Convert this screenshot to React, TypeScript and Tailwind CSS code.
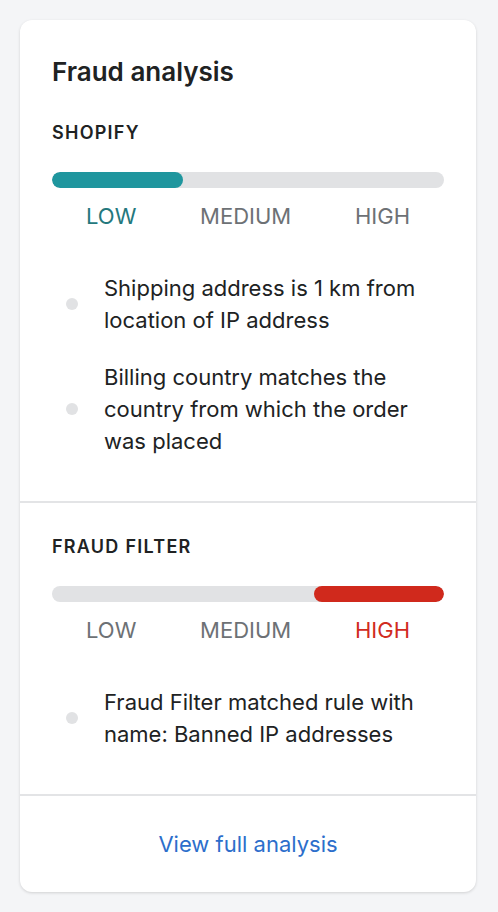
import React from 'react';

type Level = 'low' | 'medium' | 'high';

interface Section {
  name: string;
  level: Level;
  facts: string[];
}

const sections: Section[] = [
  {
    name: 'Shopify',
    level: 'low',
    facts: [
      'Shipping address is 1 km from location of IP address',
      'Billing country matches the country from which the order was placed',
    ],
  },
  {
    name: 'Fraud Filter',
    level: 'high',
    facts: ['Fraud Filter matched rule with name: Banned IP addresses'],
  },
];

function RiskBar({ level }: { level: Level }) {
  return (
    <div className="mt-[27px]">
      <div className="h-4 w-full rounded-full bg-[#e1e2e4] flex overflow-hidden">
        {level === 'low' && <div className="h-full w-1/3 rounded-full bg-[#1f969e]" />}
        {level === 'high' && (
          <>
            <div className="flex-1" />
            <div className="h-full w-[130px] rounded-full bg-[#d0291c]" />
          </>
        )}
      </div>
      <div className="mt-[14px] flex justify-between px-[34px] text-[22px] leading-7 text-[#6d7175]">
        <span className={level === 'low' ? 'text-[#24787d]' : ''}>LOW</span>
        <span className={level === 'medium' ? 'text-[#b98900]' : ''}>MEDIUM</span>
        <span className={level === 'high' ? 'text-[#d12b1f]' : ''}>HIGH</span>
      </div>
    </div>
  );
}

export default function App() {
  return (
    <div className="min-h-screen bg-[#f4f5f7] p-5" style={{ fontFamily: 'Inter, "Noto Sans", sans-serif' }}>
      <div className="w-[456px] rounded-xl bg-white text-[#202223] shadow-[0_1px_3px_rgba(0,0,0,0.15)]">
        {sections.map((s, i) => (
          <div key={s.name} className="border-b-2 border-[#e3e4e6] px-8 pt-8 pb-[44px]">
            {i === 0 && <h2 className="mb-[29px] text-[26px] leading-10 font-semibold">Fraud analysis</h2>}
            <h3 className="text-[18px] leading-6 font-semibold tracking-[0.07em] uppercase">{s.name}</h3>
            <RiskBar level={s.level} />
            <ul className="mt-[42px] flex flex-col gap-[25px]">
              {s.facts.map(f => (
                <li key={f} className="flex items-center gap-[26px]">
                  <span className="ml-[14px] h-3 w-3 shrink-0 rounded-full bg-[#e1e2e4]" />
                  <span className="text-[22px] leading-8">{f}</span>
                </li>
              ))}
            </ul>
          </div>
        ))}
        <div className="py-8 text-center">
          <a href="#" className="text-[22px] leading-8 text-[#2c6ecb]">View full analysis</a>
        </div>
      </div>
    </div>
  );
}
